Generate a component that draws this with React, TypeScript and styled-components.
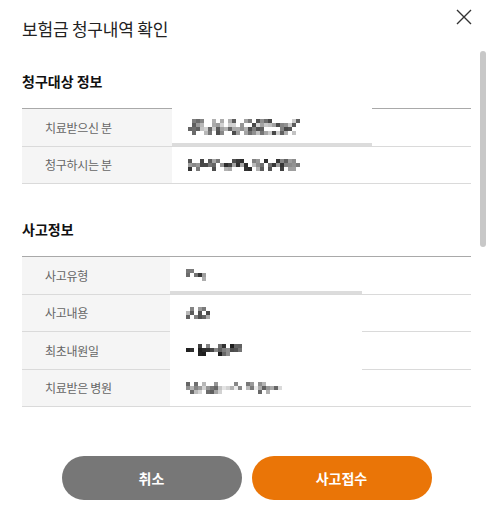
import * as React from 'react'
import styled, { createGlobalStyle } from 'styled-components'

const GlobalStyle = createGlobalStyle`
  html, body {
    margin: 0;
    padding: 0;
    background: #fff;
  }
  body {
    font-family: "Noto Sans CJK KR", "Noto Sans", sans-serif;
    color: #222;
  }
`

type Row = { label: string; seed: number; cols: number; rows: number; shade: number; hideTop?: boolean; hideBottom?: boolean; underline?: boolean }

const claimRows: Row[] = [
  { label: '치료받으신 분', seed: 3, cols: 28, rows: 4, shade: 0.62, hideTop: true, underline: true },
  { label: '청구하시는 분', seed: 11, cols: 28, rows: 3, shade: 0.5 },
]

const accidentRows: Row[] = [
  { label: '사고유형', seed: 5, cols: 5, rows: 3, shade: 0.5, underline: true },
  { label: '사고내용', seed: 8, cols: 6, rows: 3, shade: 0.6, hideBottom: true },
  { label: '최초내원일', seed: 21, cols: 14, rows: 3, shade: 0.35, hideBottom: true },
  { label: '치료받은 병원', seed: 17, cols: 24, rows: 3, shade: 0.72 },
]

// pixelated placeholder for masked personal data
function Mosaic({ seed, cols, rows, shade }: { seed: number; cols: number; rows: number; shade: number }) {
  let s = seed * 9301 + 49297
  const rnd = () => {
    s = (s * 9301 + 49297) % 233280
    return s / 233280
  }
  const cells: React.ReactNode[] = []
  for (let r = 0; r < rows; r++) {
    for (let c = 0; c < cols; c++) {
      const v = rnd()
      const edge = r === 0 || r === rows - 1
      if (v < (edge ? 0.5 : 0.2)) continue
      const g = Math.round(shade * 230 + (rnd() - 0.5) * 150)
      const gray = Math.max(30, Math.min(238, g))
      cells.push(<rect key={`${r}-${c}`} x={c * 4} y={r * 4} width={4} height={4} fill={`rgb(${gray},${gray},${gray})`} />)
    }
  }
  return (
    <svg width={cols * 4} height={rows * 4} viewBox={`0 0 ${cols * 4} ${rows * 4}`} shapeRendering='crispEdges'>
      {cells}
    </svg>
  )
}

function InfoTable({ rows, labelWidth, fieldWidth }: { rows: Row[]; labelWidth: number; fieldWidth: number }) {
  return (
    <Table>
      {rows.map(row => (
        <TableRow key={row.label} $labelWidth={labelWidth}>
          <Label>{row.label}</Label>
          <Value $fieldWidth={fieldWidth} $hideTop={row.hideTop} $hideBottom={row.hideBottom} $underline={row.underline}>
            <Mosaic seed={row.seed} cols={row.cols} rows={row.rows} shade={row.shade} />
          </Value>
        </TableRow>
      ))}
    </Table>
  )
}

export default function App() {
  return (
    <>
      <GlobalStyle />
      <Modal>
        <Header>
          <Title>보험금 청구내역 확인</Title>
          <CloseButton aria-label='닫기'>
            <svg width='16' height='16' viewBox='0 0 16 16'>
              <path d='M1 1 L15 15 M15 1 L1 15' stroke='#333' strokeWidth='1.4' fill='none' />
            </svg>
          </CloseButton>
        </Header>
        <Body>
          <Content>
            <SectionTitle>청구대상 정보</SectionTitle>
            <InfoTable rows={claimRows} labelWidth={150} fieldWidth={200} />
            <SectionTitle>사고정보</SectionTitle>
            <InfoTable rows={accidentRows} labelWidth={148} fieldWidth={192} />
          </Content>
          <ScrollThumb />
        </Body>
        <Footer>
          <Button $variant='cancel'>취소</Button>
          <Button $variant='submit'>사고접수</Button>
        </Footer>
      </Modal>
    </>
  )
}

const Modal = styled.div`
  width: 500px;
  height: 515px;
  display: flex;
  flex-direction: column;
  background: #fff;
  overflow: hidden;
`

const Header = styled.div`
  height: 51px;
  flex-shrink: 0;
  display: flex;
  justify-content: space-between;
  align-items: flex-start;
  padding: 0 28px 0 22px;
  box-sizing: border-box;
`

const Title = styled.h1`
  margin: 18px 0 0;
  font-size: 17px;
  font-weight: 400;
  line-height: 22px;
  color: #222;
  letter-spacing: -0.2px;
`

const CloseButton = styled.button`
  margin-top: 9px;
  width: 16px;
  height: 16px;
  padding: 0;
  border: 0;
  background: none;
  display: flex;
  cursor: pointer;
`

const Body = styled.div`
  position: relative;
  flex: 1;
  min-height: 0;
  overflow: hidden;
`

const Content = styled.div`
  width: 449px;
  padding-left: 22px;
`

const ScrollThumb = styled.div`
  position: absolute;
  top: 0;
  right: 14px;
  width: 6px;
  height: 196px;
  border-radius: 3px;
  background: #c8c8c8;
`

const SectionTitle = styled.h2`
  margin: 20px 0 17px;
  font-size: 14px;
  font-weight: 700;
  line-height: 20px;
  color: #111;

  & + div + & {
    margin-top: 35px;
  }
`

const Table = styled.div`
  border-top: 1px solid #a9a9a9;
`

const TableRow = styled.div<{ $labelWidth: number }>`
  display: grid;
  grid-template-columns: ${p => p.$labelWidth}px 1fr;
  height: 36.5px;
  border-bottom: 1px solid #dadada;
`

const Label = styled.div`
  display: flex;
  align-items: center;
  padding-left: 23px;
  background: #f5f5f5;
  font-size: 12px;
  color: #666;
  letter-spacing: -0.3px;
`

const Value = styled.div<{ $fieldWidth: number; $hideTop?: boolean; $hideBottom?: boolean; $underline?: boolean }>`
  position: relative;
  display: flex;
  align-items: center;
  padding-left: 16px;

  &::before {
    content: '';
    position: absolute;
    left: 0;
    width: ${p => p.$fieldWidth}px;
    top: ${p => (p.$hideTop ? '-1px' : '0')};
    bottom: 0;
    background: #fff;
    border-bottom: ${p => (p.$underline ? '3px solid #dcdcdc' : '0')};
    box-sizing: border-box;
    display: ${p => (p.$hideTop || p.$underline ? 'block' : 'none')};
  }
  &::after {
    content: '';
    position: absolute;
    left: 0;
    width: ${p => p.$fieldWidth}px;
    bottom: -1px;
    height: 1px;
    background: #fff;
    display: ${p => (p.$hideBottom ? 'block' : 'none')};
  }
  & > svg {
    position: relative;
    z-index: 1;
  }
`

const Footer = styled.div`
  flex-shrink: 0;
  width: 493px;
  display: flex;
  justify-content: center;
  gap: 10px;
  padding: 20px 0 15px;
`

const Button = styled.button<{ $variant: 'cancel' | 'submit' }>`
  width: 180px;
  height: 44px;
  border: 0;
  border-radius: 22px;
  background: ${p => (p.$variant === 'submit' ? '#ea7507' : '#777777')};
  color: #fff;
  font-family: "Noto Sans CJK KR", "Noto Sans", sans-serif;
  font-size: 14px;
  font-weight: 700;
  cursor: pointer;
`
